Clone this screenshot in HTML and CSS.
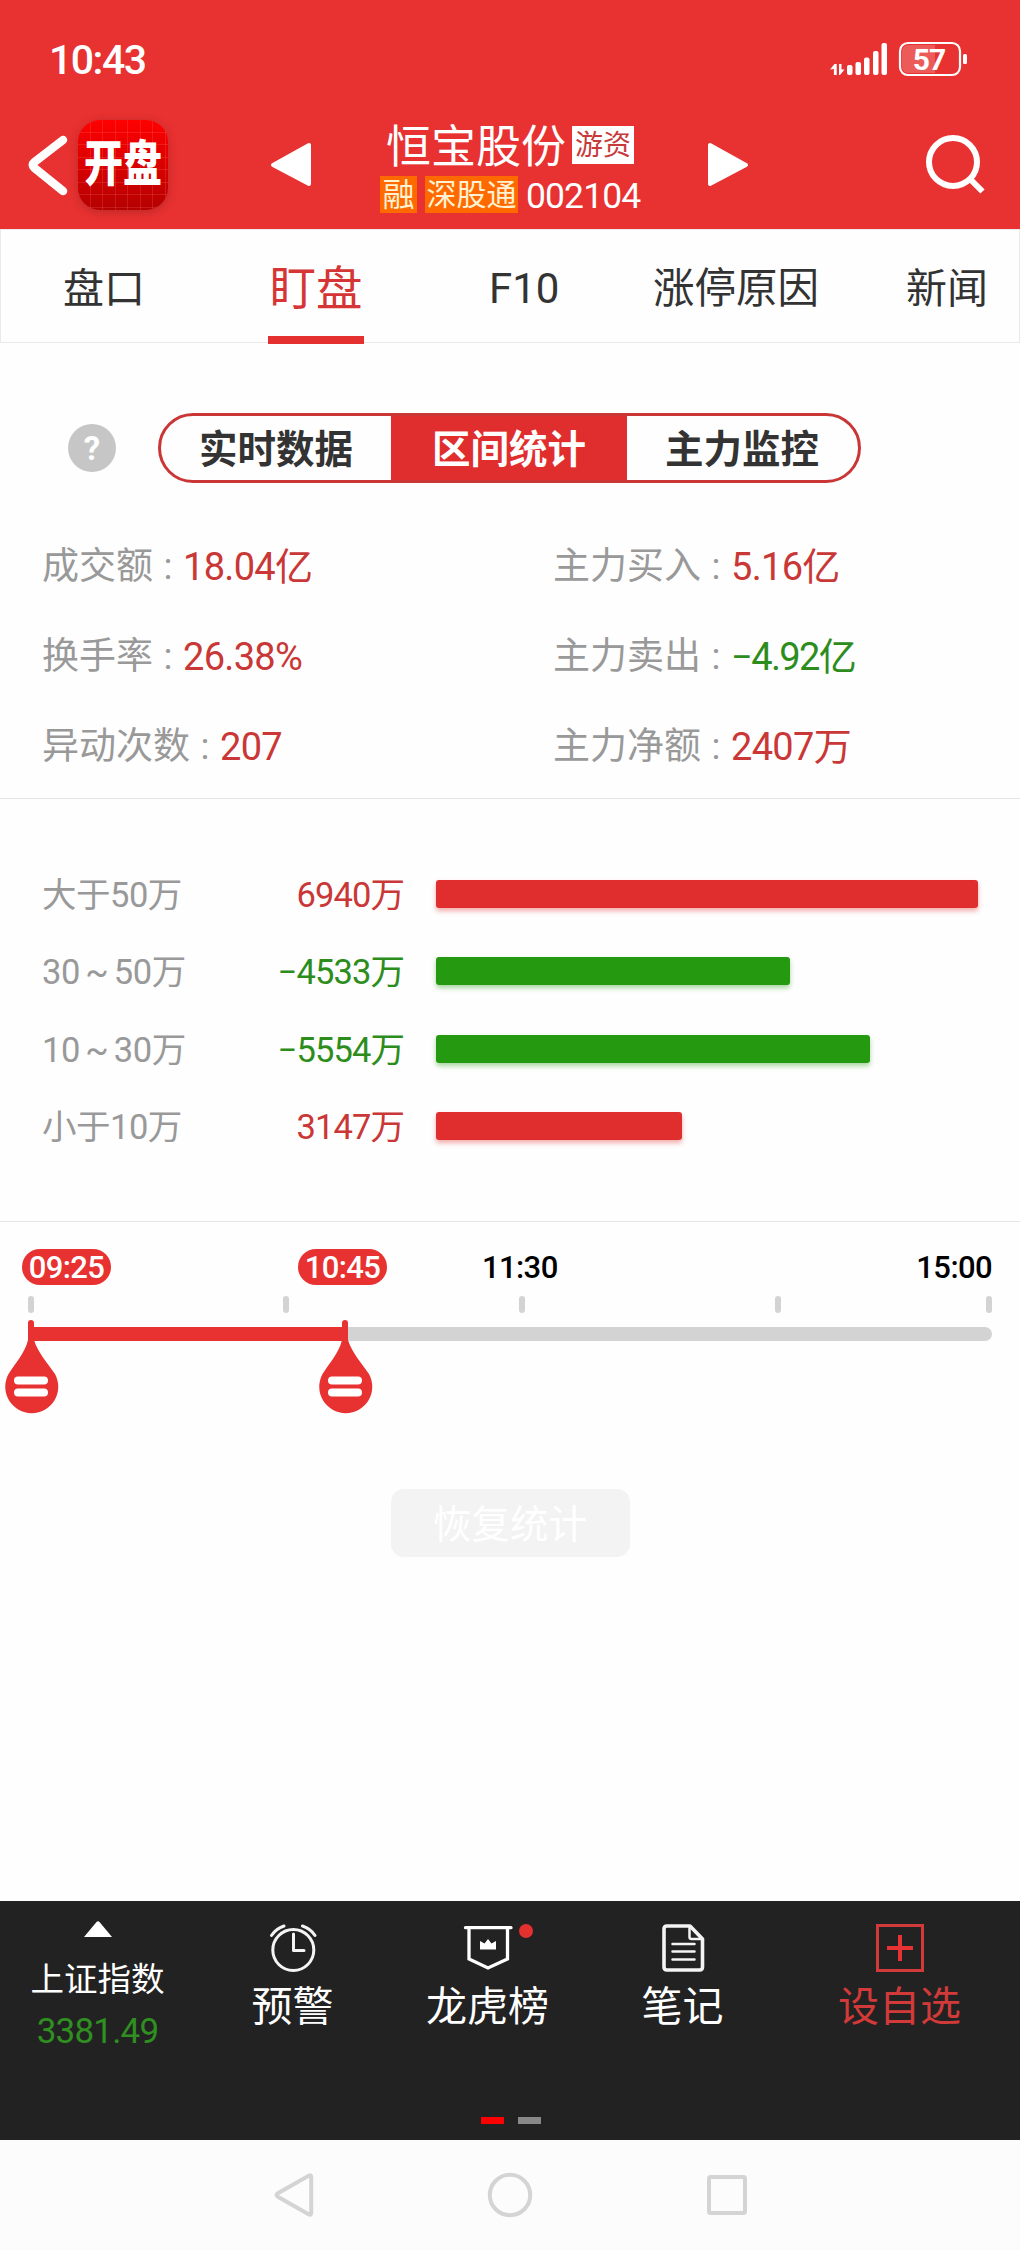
FILE: index.html
```html
<!DOCTYPE html>
<html lang="zh-CN">
<head>
<meta charset="utf-8">
<title>恒宝股份 002104</title>
<link rel="stylesheet" href="styles.css">
</head>
<body>
<header class="header">
  <div class="status">
    <span class="clock">10:43</span>
    <svg class="status-icons" width="140" height="36" viewBox="828 41 140 36">
      <g fill="#fff">
        <path d="M830 69.500l4.500-5.500h2.200v11h-2.800v-6zM839 64h2.500v5.500h3l-4.500 5.500h-1z"/>
        <rect x="847" y="65" width="5.500" height="10" rx="2"/>
        <rect x="855.500" y="62" width="5.500" height="13" rx="2"/>
        <rect x="864" y="57.500" width="5.500" height="17.500" rx="2"/>
        <rect x="873" y="51" width="5.500" height="24" rx="2"/>
        <rect x="881.500" y="43" width="5.500" height="32" rx="2"/>
        <rect x="963" y="54" width="4" height="10" rx="1.500"/>
        <path d="M908 45h27v28h-27a6 6 0 0 1-6-6V51a6 6 0 0 1 6-6z" opacity=".2"/>
      </g>
      <rect x="900" y="43" width="60" height="32" rx="8" fill="none" stroke="#fff" stroke-width="2.200"/>
      <text class="battery" x="929" y="69.500" text-anchor="middle">57</text>
    </svg>
  </div>
  <div class="titlebar">
    <svg class="back" width="42" height="62" viewBox="27 134 42 62"><path d="M63 140L34.500 162Q31 165 34.500 168L63 191" fill="none" stroke="#fff" stroke-width="8.500" stroke-linecap="round" stroke-linejoin="round"/></svg>
    <div class="logo"><span class="logo-text">开盘</span></div>
    <svg class="prev" width="44" height="48" viewBox="0 0 44 48"><path d="M40 4v39L4 24z" fill="#fff" stroke="#fff" stroke-width="4" stroke-linejoin="round"/></svg>
    <div class="stock">
      <div class="stock-name"><span>恒宝股份</span><b class="tag-white">游资</b></div>
      <div class="stock-code"><b class="tag-orange">融</b><b class="tag-orange tag-wide">深股通</b><span class="code">002104</span></div>
    </div>
    <svg class="next" width="44" height="48" viewBox="0 0 44 48"><path d="M4 4v39l36-19z" fill="#fff" stroke="#fff" stroke-width="4" stroke-linejoin="round"/></svg>
    <svg class="search" width="62" height="62" viewBox="924 133 62 62"><g fill="none" stroke="#fff" stroke-width="6"><circle cx="953" cy="162" r="24"/><path d="M970 179l12.500 12.500"/></g></svg>
  </div>
</header>
<nav class="tabs">
  <span class="tab">盘口</span><span class="tab tab-on">盯盘</span><span class="tab tab-f10">F10</span><span class="tab tab-reason">涨停原因</span><span class="tab tab-news">新闻</span>
</nav>
<section class="panel">
  <div class="modes">
    <span class="help">?</span>
    <div class="segmented"><span class="seg">实时数据</span><span class="seg seg-on">区间统计</span><span class="seg">主力监控</span></div>
  </div>
  <div class="stats">
    <div class="stat">成交额<i>:</i><b class="up">18.04亿</b></div>
    <div class="stat">主力买入<i>:</i><b class="up">5.16亿</b></div>
    <div class="stat">换手率<i>:</i><b class="up">26.38%</b></div>
    <div class="stat">主力卖出<i>:</i><b class="down">−4.92亿</b></div>
    <div class="stat">异动次数<i>:</i><b class="up">207</b></div>
    <div class="stat">主力净额<i>:</i><b class="up">2407万</b></div>
  </div>
</section>
<section class="bars">
  <div class="bar-row"><span>大于50万</span><b class="up">6940万</b><div class="bar bar-up" style="width:542px"></div></div>
  <div class="bar-row"><span>30 ~ 50万</span><b class="down">−4533万</b><div class="bar bar-down" style="width:354px"></div></div>
  <div class="bar-row"><span>10 ~ 30万</span><b class="down">−5554万</b><div class="bar bar-down" style="width:434px"></div></div>
  <div class="bar-row"><span>小于10万</span><b class="up">3147万</b><div class="bar bar-up" style="width:246px"></div></div>
</section>
<section class="range">
  <div class="times"><span class="pill">09:25</span><span class="pill">10:45</span><span class="time">11:30</span><span class="time">15:00</span></div>
  <div class="ticks"><i></i><i></i><i></i><i></i><i></i></div>
  <div class="track">
    <div class="fill" style="width:320px"></div>
    <svg class="handle" style="left:-23px" width="54" height="94" viewBox="0 0 54 94"><path d="M23 3a3 3 0 0 1 6 0V20C33 33 42 42 50 54A26.500 26.500 0 1 1 3.500 54C11 42 20 33 23 20z" fill="#e83131"/><path d="M13 60.500h26M13 72.500h26" stroke="#fff" stroke-width="8" stroke-linecap="round"/></svg>
    <svg class="handle" style="left:291px" width="54" height="94" viewBox="0 0 54 94"><path d="M23 3a3 3 0 0 1 6 0V20C33 33 42 42 50 54A26.500 26.500 0 1 1 3.500 54C11 42 20 33 23 20z" fill="#e83131"/><path d="M13 60.500h26M13 72.500h26" stroke="#fff" stroke-width="8" stroke-linecap="round"/></svg>
  </div>
  <div class="reset">恢复统计</div>
</section>
<footer class="toolbar">
  <div class="tools">
    <div class="index"><svg width="28" height="16" viewBox="0 0 28 16"><path d="M0 16L12.500 1Q14-.5 15.500 1L28 16z" fill="#fff"/></svg><span class="index-name">上证指数</span><span class="index-value">3381.49</span></div>
    <div class="tool"><svg width="48" height="50" viewBox="268 1923 48 50"><g fill="none" stroke="#f4f4f4" stroke-width="3" stroke-linecap="round" stroke-linejoin="round"><circle cx="292.300" cy="1950" r="20.500"/><path d="M292.500 1934v16.500h10.500M270.500 1935.500Q275 1928.500 283 1926M301.500 1926Q309.500 1928.500 314 1935.500"/></g></svg><span>预警</span></div>
    <div class="tool"><svg width="72" height="50" viewBox="451 1923 72 50"><path d="M464.500 1927.700H510M468 1928v31l19 9 19.500-9v-31" fill="none" stroke="#fff" stroke-width="3.300" stroke-linecap="round"/><path d="M479 1949.500v-8.500l4.500 2.500 3.500-4.500 3.500 4.500 4.500-2.500v8.500z" fill="#fff"/></svg><span>龙虎榜</span><i class="dot"></i></div>
    <div class="tool"><svg width="44" height="50" viewBox="660 1923 44 50"><g fill="none" stroke="#f4f4f4" stroke-linejoin="round" stroke-linecap="round"><path d="M666 1926h23l12.500 13v28q0 3-3 3H666q-3 0-3-3v-38q0-3 3-3z" stroke-width="3.600"/><path d="M688.500 1927v10q0 2 2 2H701" stroke-width="2.500"/><path d="M671.500 1944h22M671.500 1951.500h22M671.500 1959.500h22" stroke-width="2.500"/></g></svg><span>笔记</span></div>
    <div class="tool tool-add"><svg width="48" height="50" viewBox="0 0 48 50"><path d="M1.500 2.500h45v45h-45z" fill="none" stroke="#d23a3a" stroke-width="3"/><path d="M24 12v26M11 25h26" stroke="#e63232" stroke-width="4"/></svg><span>设自选</span></div>
  </div>
  <div class="pager"><i class="page page-on"></i><i class="page"></i></div>
</footer>
<div class="sysnav">
  <svg width="42" height="48" viewBox="272 2171 42 48"><path d="M308 2175.500q2.200-1 2.200 1.500v36q0 2.500-2.200 1.500l-31.500-18q-2-1.500 0-3z" fill="none" stroke="#d4d4d4" stroke-width="4"/></svg>
  <svg width="48" height="48" viewBox="0 0 48 48"><circle cx="24" cy="24" r="20.200" fill="none" stroke="#d4d4d4" stroke-width="4"/></svg>
  <svg width="42" height="48" viewBox="0 0 42 48"><rect x="3" y="6" width="36" height="36" rx="1.500" fill="none" stroke="#d4d4d4" stroke-width="4"/></svg>
</div>
</body>
</html>
```
FILE: styles.css
```css
* { box-sizing: border-box; }
body {
  margin: 0;
  width: 1020px;
  height: 2250px;
  background: #fefefe;
  color: #333;
  font-family: Roboto, "Noto Sans CJK SC", sans-serif;
  white-space: nowrap;
  overflow: hidden;
  display: flex;
  flex-direction: column;
}
svg { display: block; flex: none; }
b, i { font-weight: 400; font-style: normal; }

.header { height: 229px; background: #e83131; color: #fff; }
.status { height: 101px; padding: 41px 52px 0 49px; display: flex; justify-content: space-between; }
.clock { font-size: 41px; line-height: 39px; font-weight: 500; letter-spacing: -1.5px; }
.battery { fill: #fff; font-size: 30px; font-weight: 700; letter-spacing: -1px; }
.titlebar { height: 128px; padding: 19px 34px 0 27px; display: flex; align-items: flex-start; }
.back { margin-top: 14px; }
.logo {
  width: 90px; height: 90px; margin-left: 9px; flex: none;
  border-radius: 22px;
  background:
    repeating-linear-gradient(90deg, transparent 0 11.500px, rgba(255,120,120,.22) 11.500px 12.500px),
    repeating-linear-gradient(180deg, transparent 0 11.500px, rgba(255,120,120,.22) 11.500px 12.500px),
    linear-gradient(#f00, #b40000);
  box-shadow: 0 2px 9px rgba(120,30,30,.4);
  display: flex; align-items: center; justify-content: center;
}
.logo-text { font-size: 39px; line-height: 48px; font-weight: 900; transform: scaleY(1.25); }
.prev { margin: 21px 0 0 101px; }
.stock { margin-left: 67px; width: 262px; }
.stock-name { display: flex; align-items: center; height: 50px; padding-left: 6px; font-size: 45px; }
.stock-name span { padding-top: 5px; line-height: 50px; }
.tag-white { width: 62px; height: 38px; margin-left: 6px; background: #fff; color: #c83a3a; font-size: 28px; line-height: 40px; text-align: center; }
.stock-code { display: flex; align-items: center; height: 37px; margin-top: 6px; }
.tag-orange { width: 37px; height: 37px; background: #ff6a00; color: #fff2d2; font-size: 32px; line-height: 38px; text-align: center; }
.tag-wide { width: 93px; margin-left: 8px; font-size: 30px; }
.code { margin-left: 8px; font-size: 35.500px; line-height: 38px; padding-top: 2px; letter-spacing: -.9px; }
.next { margin: 21px 0 0 64px; }
.search { margin: 13px 0 0 auto; }

.tabs { height: 114px; border: 1px solid #e9e9e9; padding-left: 62px; display: flex; font-size: 41px; line-height: 118px; }
.tab { display: block; height: 114px; }
.tab-on { width: 96px; margin-left: 123px; text-align: center; font-size: 46.500px; color: #d63535; box-shadow: inset 0 -8px #e53030; }
.tab-f10 { width: 72px; margin-left: 125px; font-size: 42px; }
.tab-reason { width: 166px; margin-left: 92px; font-size: 41.500px; }
.tab-news { margin-left: 87px; }

.panel { height: 456px; border-bottom: 1px solid #e6e6e6; }
.modes { display: flex; align-items: center; height: 70px; margin-top: 70px; padding-left: 68px; }
.help { width: 48px; height: 48px; border-radius: 50%; background: #c6c6c6; color: #fff; font-size: 33px; font-weight: 700; line-height: 49px; text-align: center; }
.segmented { display: flex; width: 703px; height: 70px; margin-left: 42px; border: 3px solid #ca3536; border-radius: 35px; overflow: hidden; }
.seg { width: 230px; font-size: 38.500px; font-weight: 700; line-height: 67px; text-align: center; }
.seg-on { width: 236px; margin: -1px 0; padding-top: 1px; background: #e02d2e; color: #fff; }
.stats { display: grid; grid-template-columns: 511px 1fr; grid-auto-rows: 90px; padding: 39px 0 0 42px; }
.stat { display: flex; align-items: center; font-size: 37px; line-height: 44px; color: #999; }
.stat i { width: 30px; text-align: center; }
.stat b { font-size: 38px; letter-spacing: -.7px; }
.stat .down { letter-spacing: -1.600px; }
.stat .up, .bar-row .up { color: #c93737; }
.stat .down, .bar-row .down { color: #2d8d1c; }

.bars { height: 423px; padding: 56px 0 0 42px; border-bottom: 1px solid #e6e6e6; }
.bar-row { display: grid; grid-template-columns: 200px 162px 1fr; align-items: center; height: 77.500px; font-size: 34.500px; line-height: 50px; color: #999; }
.bar-row span { padding-top: 2px; letter-spacing: -.5px; word-spacing: -2.500px; }
.bar-row b { padding-top: 2px; text-align: right; letter-spacing: -.9px; }
.bar-row .bar { margin-left: 32px; }
.bar { height: 28px; border-radius: 3px; }
.bar-up { background: #e02d2e; box-shadow: 0 3px 5px rgba(224,45,46,.4); }
.bar-down { background: #259910; box-shadow: 0 3px 5px rgba(37,153,16,.4); }

.range { height: 679px; padding: 27px 28px 0 28px; }
.times { display: flex; margin: 0 0 0 -6px; height: 36px; font-size: 31px; line-height: 38px; font-weight: 500; color: #000; letter-spacing: -.6px; }
.pill { width: 89px; height: 36px; border-radius: 18px; background: #e83131; color: #fff; text-align: center; }
.pill + .pill { margin-left: 187px; }
.time { margin-left: 95px; }
.time:last-child { margin-left: auto; }
.ticks { display: grid; grid-template-columns: 255px 236px 256px 211px 6px; height: 17px; margin-top: 11px; }
.ticks i { width: 6px; height: 17px; border-radius: 3px; background: #d3d3d3; }
.track { position: relative; width: 964px; height: 14px; margin-top: 14px; border-radius: 7px; background: #d3d3d3; }
.fill { height: 14px; background: #e83131; }
.handle { position: absolute; top: -7px; }
.reset { width: 239px; height: 68px; margin: 148px auto 0; border-radius: 13px; background: #f3f3f3; color: #fff; font-size: 38.500px; line-height: 71px; text-align: center; }

.toolbar { height: 239px; background: #222; color: #fff; }
.tools { display: flex; height: 216px; padding-top: 20px; }
.index { width: 195px; display: flex; flex-direction: column; align-items: center; }
.index-name { margin-top: 22px; font-size: 33.500px; line-height: 42px; }
.index-value { margin-top: 10px; font-size: 35px; line-height: 42px; letter-spacing: -.8px; color: #2f8f20; }
.tool { position: relative; width: 195px; padding-top: 2px; display: flex; flex-direction: column; align-items: center; font-size: 41px; }
.tool span { margin-top: 9px; line-height: 50px; }
.tool-add { margin-left: 22px; color: #d23a3a; }
.dot { position: absolute; left: 129px; top: 3px; width: 14px; height: 14px; border-radius: 50%; background: #e53030; }
.pager { display: flex; justify-content: center; gap: 14px; padding-left: 2px; }
.page { width: 23px; height: 7px; background: #888; }
.page-on { background: #f00; }

.sysnav { height: 110px; background: #fcfcfc; display: flex; justify-content: center; align-items: center; gap: 171.500px; }
```
